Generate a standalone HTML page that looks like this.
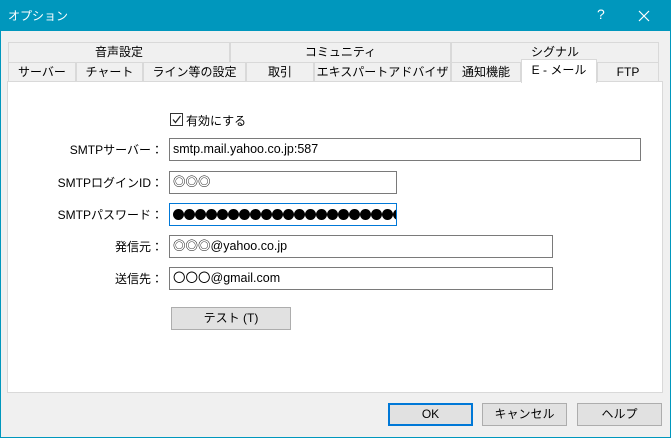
<!DOCTYPE html>
<html><head><meta charset="utf-8"><style>
*{box-sizing:border-box;margin:0;padding:0}
body{width:671px;height:438px;background:#f0f0f0;font-family:"Liberation Sans","Noto Sans CJK JP",sans-serif;font-size:12px;color:#000;position:relative;overflow:hidden}
.win{position:absolute;left:0;top:0;width:671px;height:438px;border:1px solid #0097bd;border-top:none}
.title{position:absolute;left:0;top:0;width:671px;height:31px;background:#0097bd;color:#fff}
.title span{position:absolute;top:7px}
.a{position:absolute}
.tab{position:absolute;border:1px solid #d9d9d9;border-bottom:none;background:#f0f0f0;text-align:center;line-height:18px;font-size:12px}
.panel{position:absolute;left:7px;top:81px;width:656px;height:312px;background:#fff;border:1px solid #d9d9d9}
.in{position:absolute;height:23px;border:1px solid #7a7a7a;background:#fff;padding-left:3px;line-height:20px;font-size:12.5px}
.lbl{position:absolute;right:508px;text-align:right;font-size:12px}
.btn{position:absolute;height:23px;border:1px solid #adadad;background:#e1e1e1;text-align:center;line-height:21px}
.d{position:absolute;top:5px;width:11px;height:11px;border-radius:50%;background:#000}
</style></head><body>
<div class="win"></div>
<div class="title"><span style="left:8px">オプション</span><span style="left:597px;font-size:14px;top:6px">?</span>
<svg class="a" style="left:638px;top:10px" width="12" height="12"><path d="M1 1L11 11M11 1L1 11" stroke="#fff" stroke-width="1.2"/></svg></div>
<div class="tab" style="left:8px;top:42px;width:222px;height:20px">音声設定</div>
<div class="tab" style="left:230px;top:42px;width:221px;height:20px">コミュニティ</div>
<div class="tab" style="left:451px;top:42px;width:208px;height:20px">シグナル</div>
<div class="tab" style="left:8px;top:62px;width:68px;height:19px">サーバー</div>
<div class="tab" style="left:76px;top:62px;width:67px;height:19px">チャート</div>
<div class="tab" style="left:143px;top:62px;width:103px;height:19px">ライン等の設定</div>
<div class="tab" style="left:246px;top:62px;width:68px;height:19px">取引</div>
<div class="tab" style="left:314px;top:62px;width:137px;height:19px">エキスパートアドバイザ</div>
<div class="tab" style="left:451px;top:62px;width:70px;height:19px">通知機能</div>
<div class="tab" style="left:597px;top:62px;width:62px;height:19px">FTP</div>
<div class="panel"></div>
<div class="tab" style="left:521px;top:59px;width:76px;height:24px;background:#fff;line-height:20px;z-index:2">E - メール</div>
<div class="a" style="left:170px;top:113px;width:13px;height:13px;border:1px solid #333;background:#fff"><svg width="11" height="11" style="display:block"><path d="M2 5.5L4.5 8.5L9.5 2" stroke="#222" fill="none" stroke-width="1.2"/></svg></div>
<div class="a" style="left:186px;top:112px">有効にする</div>
<div class="lbl" style="top:141px">SMTPサーバー：</div>
<div class="in" style="left:169px;top:138px;width:472px">smtp.mail.yahoo.co.jp:587</div>
<div class="lbl" style="top:174px">SMTPログインID：</div>
<div class="in" style="left:169px;top:171px;width:228px">◎◎◎</div>
<div class="lbl" style="top:206px">SMTPパスワード：</div>
<div class="in" style="left:169px;top:203px;width:228px;border-color:#0078d7;overflow:hidden">
<div class="d" style="left:3px"></div><div class="d" style="left:14px"></div><div class="d" style="left:25px"></div><div class="d" style="left:36px"></div><div class="d" style="left:47px"></div><div class="d" style="left:58px"></div><div class="d" style="left:69px"></div><div class="d" style="left:80px"></div><div class="d" style="left:91px"></div><div class="d" style="left:102px"></div><div class="d" style="left:113px"></div><div class="d" style="left:124px"></div><div class="d" style="left:135px"></div><div class="d" style="left:146px"></div><div class="d" style="left:157px"></div><div class="d" style="left:168px"></div><div class="d" style="left:179px"></div><div class="d" style="left:190px"></div><div class="d" style="left:201px"></div><div class="d" style="left:212px"></div><div class="d" style="left:223px"></div>
</div>
<div class="lbl" style="top:238px">発信元：</div>
<div class="in" style="left:169px;top:235px;width:384px">◎◎◎@yahoo.co.jp</div>
<div class="lbl" style="top:270px">送信先：</div>
<div class="in" style="left:169px;top:267px;width:384px">〇〇〇@gmail.com</div>
<div class="btn" style="left:171px;top:307px;width:120px">テスト (T)</div>
<div class="btn" style="left:388px;top:403px;width:85px;border:2px solid #0078d7;line-height:19px">OK</div>
<div class="btn" style="left:482px;top:403px;width:85px">キャンセル</div>
<div class="btn" style="left:577px;top:403px;width:85px">ヘルプ</div>
</body></html>
